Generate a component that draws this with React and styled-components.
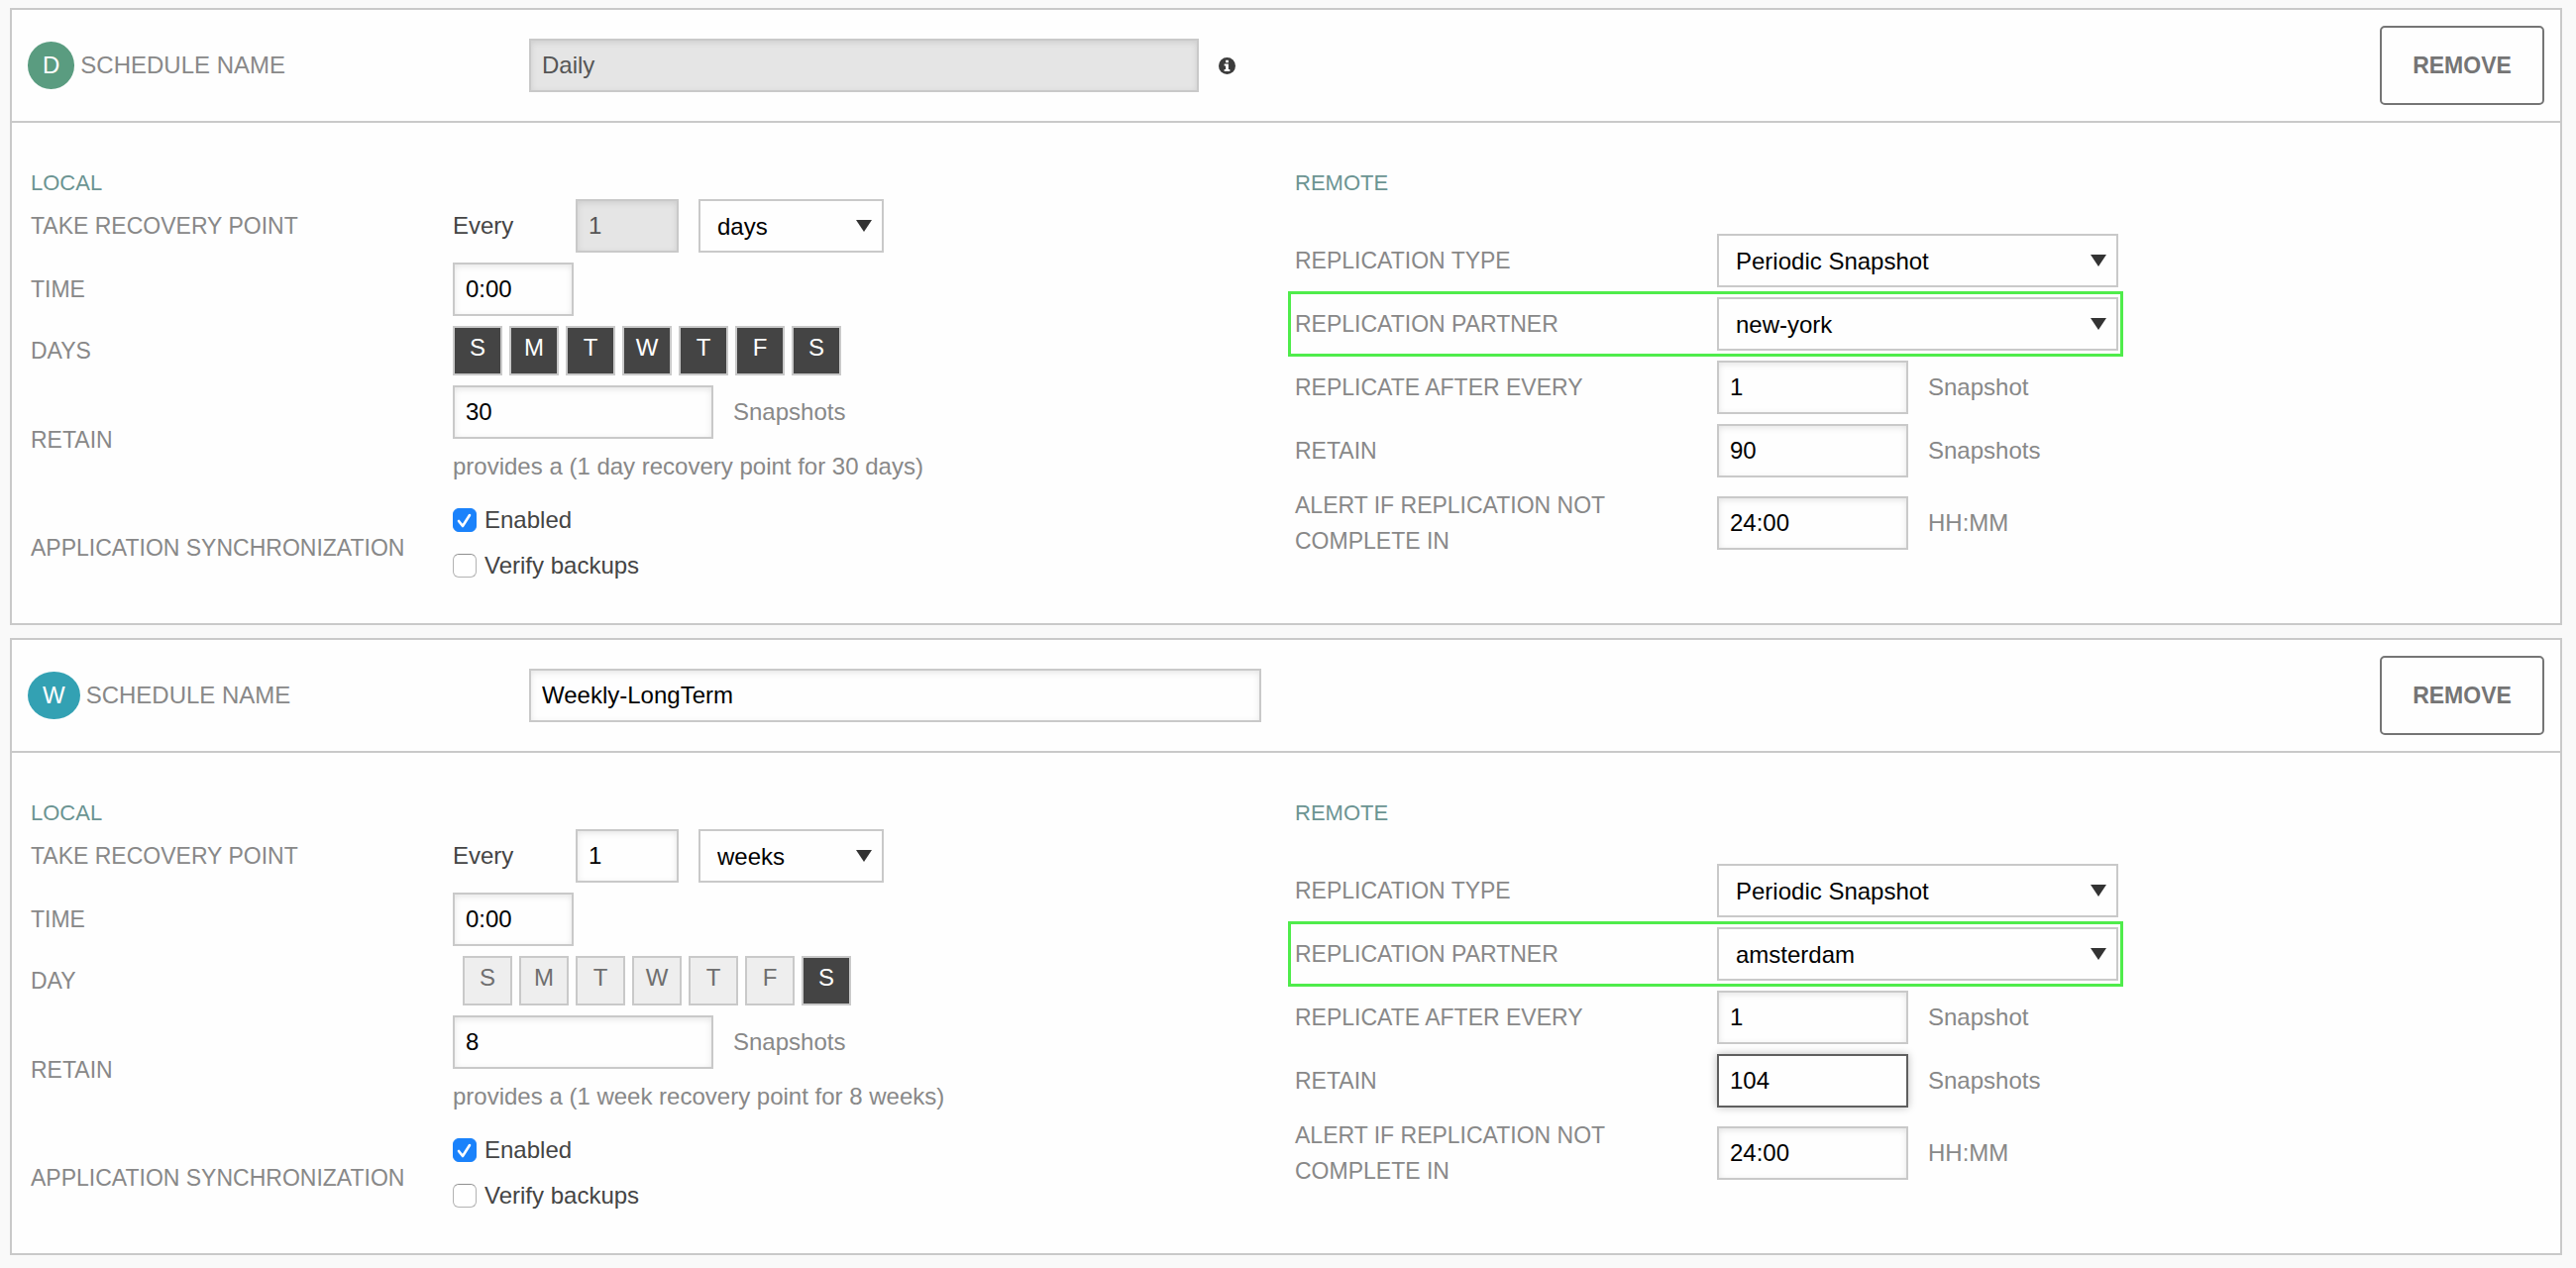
import { useState } from 'react'
import styled, { createGlobalStyle } from 'styled-components'

const GlobalStyle = createGlobalStyle`
  *{
    box-sizing: border-box;
    padding: 0;
    margin: 0;
    font-family: "Liberation Sans", Arial, sans-serif;
  }

  body{
    background: #f9f9f9;
    color: #444;
    font-size: 24px;
  }
`

const Page = styled.main`
  padding: 8px 14px 13px 10px;
  display: flex;
  flex-direction: column;
  gap: 13px;
`

const Card = styled.section`
  background: #fefefe;
  border: 2px solid #c9c9c9;
`

const CardHeader = styled.header`
  display: grid;
  grid-template-columns: 506fr 739fr 1295fr;
  align-items: center;
  padding: 16px;
  border-bottom: 2px solid #c9c9c9;
`

const NameLabel = styled.label`
  display: flex;
  align-items: center;
  gap: 6px;
  color: #888;
`

const Badge = styled.span`
  height: 48px;
  padding: 0 15px;
  border-radius: 50%;
  background: ${({ $color }) => $color};
  color: #fff;
  line-height: 48px;
`

const NameField = styled.div`
  display: flex;
  align-items: center;
  gap: 20px;

  svg{
    flex: none;
    margin-right: 26px;
  }
`

const RemoveButton = styled.button`
  justify-self: end;
  width: 166px;
  height: 80px;
  background: #fefefe;
  color: #757575;
  border: 2px solid #757575;
  border-radius: 5px;
  font-size: 23px;
  font-weight: bold;

  &:hover{
    cursor: pointer;
    background: #f2f2f2;
  }
`

const CardBody = styled.div`
  display: grid;
  grid-template-columns: 1fr 1fr;
  padding: 50px 10px 27px;
`

const Title = styled.h2`
  padding-left: 9px;
  margin-bottom: ${({ $gap }) => $gap || 0}px;
  color: #6b9492;
  font-size: 22px;
  font-weight: normal;
  line-height: 22px;
`

const Row = styled.div`
  position: relative;
  display: grid;
  grid-template-columns: 435fr 841fr;
  align-items: center;
  padding: 5px 0;
  color: #888;
  line-height: 36px;
`

const RowLabel = styled.label`
  padding: 0 90px 0 9px;
  font-size: 23px;
`

const WideLabel = styled.span`
  padding-left: 9px;
  font-size: 23px;
`

const Controls = styled.div`
  display: flex;
  align-items: center;
  gap: ${({ $gap }) => $gap || 20}px;
  padding-left: ${({ $indent }) => $indent || 0}px;
`

const Stack = styled.div`
  display: flex;
  flex-direction: column;
  gap: 10px;
  padding-bottom: 10px;
`

const Every = styled.label`
  width: 104px;
  color: #444;
`

const Input = styled.input`
  width: ${({ $width }) => $width || '100%'};
  height: 54px;
  padding: 0 11px;
  background: #fefefe;
  color: #000;
  border: 2px solid ${({ $active }) => ($active ? '#5f5f5f' : '#c9c9c9')};
  border-radius: 0;
  box-shadow: ${({ $active }) =>
    $active ? '0 0 8px rgba(0, 0, 0, 0.25)' : 'inset 0 2px 6px rgba(0, 0, 0, 0.1)'};
  font-size: 24px;
  outline: none;

  &:disabled{
    background: #e5e5e5;
    color: #555;
  }
`

const SelectBox = styled.div`
  position: relative;
  width: ${({ $width }) => $width};

  select{
    appearance: none;
    display: block;
    width: 100%;
    height: 54px;
    padding: 0 40px 0 17px;
    background: #fefefe;
    color: #000;
    border: 2px solid #c9c9c9;
    border-radius: 0;
    font-size: 24px;
  }

  svg{
    position: absolute;
    right: 12px;
    top: 21px;
    pointer-events: none;
  }
`

const DayButton = styled.button`
  width: 50px;
  height: 50px;
  padding-bottom: 6px;
  background: ${({ $on }) => ($on ? '#444' : '#eee')};
  color: ${({ $on }) => ($on ? '#fff' : '#6f6f6f')};
  border: 2px solid #c9c9c9;
  font-size: 24px;
  cursor: pointer;
`

const SyncRow = styled(Row)`
  padding: 0;
`

const SyncOptions = styled.div`
  display: flex;
  flex-direction: column;
  gap: 4px;
  padding-bottom: 10px;
`

const CheckLabel = styled.label`
  display: flex;
  align-items: center;
  gap: 8px;
  height: 42px;
  color: #444;
`

const CheckBox = styled.span`
  position: relative;
  width: 24px;
  height: 24px;

  input{
    appearance: none;
    display: block;
    width: 24px;
    height: 24px;
    background: #fff;
    border: 1px solid #b3b3b3;
    border-top-color: #8f8f8f;
    border-radius: 6px;
  }

  input:checked{
    background: #1a82fb;
    border-color: #1a82fb;
  }

  svg{
    position: absolute;
    left: 0;
    top: 0;
    pointer-events: none;
  }
`

const Highlight = styled.div`
  position: absolute;
  top: -1px;
  bottom: -1px;
  left: 2px;
  width: 843px;
  border: 3px solid #4fec4b;
  pointer-events: none;
`

const DAY_LETTERS = ['S', 'M', 'T', 'W', 'T', 'F', 'S']

const schedules = [
  {
    id: 'daily',
    letter: 'D',
    color: '#5a9c80',
    name: 'Daily',
    locked: true,
    unit: 'days',
    dayLabel: 'DAYS',
    days: [true, true, true, true, true, true, true],
    retain: '30',
    hint: 'provides a (1 day recovery point for 30 days)',
    partner: 'new-york',
    remoteRetain: '90',
  },
  {
    id: 'weekly',
    letter: 'W',
    color: '#33a1b3',
    name: 'Weekly-LongTerm',
    unit: 'weeks',
    dayLabel: 'DAY',
    dayIndent: 10,
    days: [false, false, false, false, false, false, true],
    retain: '8',
    hint: 'provides a (1 week recovery point for 8 weeks)',
    partner: 'amsterdam',
    remoteRetain: '104',
    editing: true,
  },
]

function InfoIcon() {
  return (
    <svg width="17" height="17" viewBox="0 0 16 16">
      <circle cx="8" cy="8" r="8" fill="#3c3c3c" />
      <path d="M6.7 2.6H9.3V4.9H6.7ZM5.3 6.2H9.3V11.2H10.7V13.1H5.3V11.2H6.7V8.1H5.3Z" fill="#fff" />
    </svg>
  )
}

function Select({ id, width, value, options }) {
  return (
    <SelectBox $width={width}>
      <select id={id} defaultValue={value}>
        {options.map((option) => (
          <option key={option}>{option}</option>
        ))}
      </select>
      <svg width="16" height="12" viewBox="0 0 16 12">
        <path d="M0 0H16L8 12Z" fill="#333" />
      </svg>
    </SelectBox>
  )
}

function Check({ label, initial }) {
  const [checked, setChecked] = useState(initial)

  return (
    <CheckLabel>
      <CheckBox>
        <input type="checkbox" checked={checked} onChange={() => setChecked(!checked)} />
        {checked && (
          <svg width="24" height="24" viewBox="0 0 24 24">
            <path d="M6 13L10 18L17 7" fill="none" stroke="#fff" strokeWidth="2.6" strokeLinecap="round" strokeLinejoin="round" />
          </svg>
        )}
      </CheckBox>
      {label}
    </CheckLabel>
  )
}

function Local({ schedule }) {
  const { id } = schedule
  const [days, setDays] = useState(schedule.days)

  const toggleDay = (index) => {
    const newDays = [...days]
    newDays[index] = !newDays[index]
    setDays(newDays)
  }

  return (
    <div>
      <Title>LOCAL</Title>
      <Row>
        <RowLabel htmlFor={`${id}-unit`}>TAKE RECOVERY POINT</RowLabel>
        <Controls>
          <Every htmlFor={`${id}-every`}>Every</Every>
          <Input id={`${id}-every`} $width="104px" defaultValue="1" disabled={schedule.locked} />
          <Select id={`${id}-unit`} width="187px" value={schedule.unit} options={['hours', 'days', 'weeks']} />
        </Controls>
      </Row>
      <Row>
        <RowLabel htmlFor={`${id}-time`}>TIME</RowLabel>
        <Input id={`${id}-time`} $width="122px" defaultValue="0:00" />
      </Row>
      <Row>
        <WideLabel id={`${id}-days`}>{schedule.dayLabel}</WideLabel>
        <Controls $gap={7} $indent={schedule.dayIndent} role="group" aria-labelledby={`${id}-days`}>
          {DAY_LETTERS.map((letter, index) => (
            <DayButton key={index} type="button" $on={days[index]} aria-pressed={days[index]} onClick={() => toggleDay(index)}>
              {letter}
            </DayButton>
          ))}
        </Controls>
      </Row>
      <Row>
        <RowLabel htmlFor={`${id}-retain`}>RETAIN</RowLabel>
        <Stack>
          <Controls>
            <Input id={`${id}-retain`} $width="263px" defaultValue={schedule.retain} />
            <span>Snapshots</span>
          </Controls>
          <p>{schedule.hint}</p>
        </Stack>
      </Row>
      <SyncRow>
        <WideLabel id={`${id}-sync`}>APPLICATION SYNCHRONIZATION</WideLabel>
        <SyncOptions role="group" aria-labelledby={`${id}-sync`}>
          <Check label="Enabled" initial={true} />
          <Check label="Verify backups" initial={false} />
        </SyncOptions>
      </SyncRow>
    </div>
  )
}

function Remote({ schedule }) {
  const { id } = schedule

  return (
    <div>
      <Title $gap={35}>REMOTE</Title>
      <Row>
        <RowLabel htmlFor={`${id}-type`}>REPLICATION TYPE</RowLabel>
        <Select id={`${id}-type`} width="405px" value="Periodic Snapshot" options={['Periodic Snapshot', 'Realtime']} />
      </Row>
      <Row>
        <RowLabel htmlFor={`${id}-partner`}>REPLICATION PARTNER</RowLabel>
        <Select id={`${id}-partner`} width="405px" value={schedule.partner} options={['new-york', 'amsterdam']} />
        <Highlight />
      </Row>
      <Row>
        <RowLabel htmlFor={`${id}-after`}>REPLICATE AFTER EVERY</RowLabel>
        <Controls>
          <Input id={`${id}-after`} $width="193px" defaultValue="1" />
          <span>Snapshot</span>
        </Controls>
      </Row>
      <Row>
        <RowLabel htmlFor={`${id}-remote-retain`}>RETAIN</RowLabel>
        <Controls>
          <Input id={`${id}-remote-retain`} $width="193px" $active={schedule.editing} defaultValue={schedule.remoteRetain} />
          <span>Snapshots</span>
        </Controls>
      </Row>
      <Row>
        <RowLabel htmlFor={`${id}-alert`}>ALERT IF REPLICATION NOT COMPLETE IN</RowLabel>
        <Controls>
          <Input id={`${id}-alert`} $width="193px" defaultValue="24:00" />
          <span>HH:MM</span>
        </Controls>
      </Row>
    </div>
  )
}

function App() {
  const [list, setList] = useState(schedules)

  const removeSchedule = (id) => {
    setList(list.filter((schedule) => schedule.id !== id))
  }

  return (
    <>
      <GlobalStyle />
      <Page>
        {list.map((schedule) => (
          <Card key={schedule.id}>
            <CardHeader>
              <NameLabel htmlFor={`${schedule.id}-name`}>
                <Badge $color={schedule.color}>{schedule.letter}</Badge>
                SCHEDULE NAME
              </NameLabel>
              <NameField>
                <Input id={`${schedule.id}-name`} defaultValue={schedule.name} disabled={schedule.locked} />
                {schedule.locked && <InfoIcon />}
              </NameField>
              <RemoveButton type="button" onClick={() => removeSchedule(schedule.id)}>REMOVE</RemoveButton>
            </CardHeader>
            <CardBody>
              <Local schedule={schedule} />
              <Remote schedule={schedule} />
            </CardBody>
          </Card>
        ))}
      </Page>
    </>
  )
}

export default App
